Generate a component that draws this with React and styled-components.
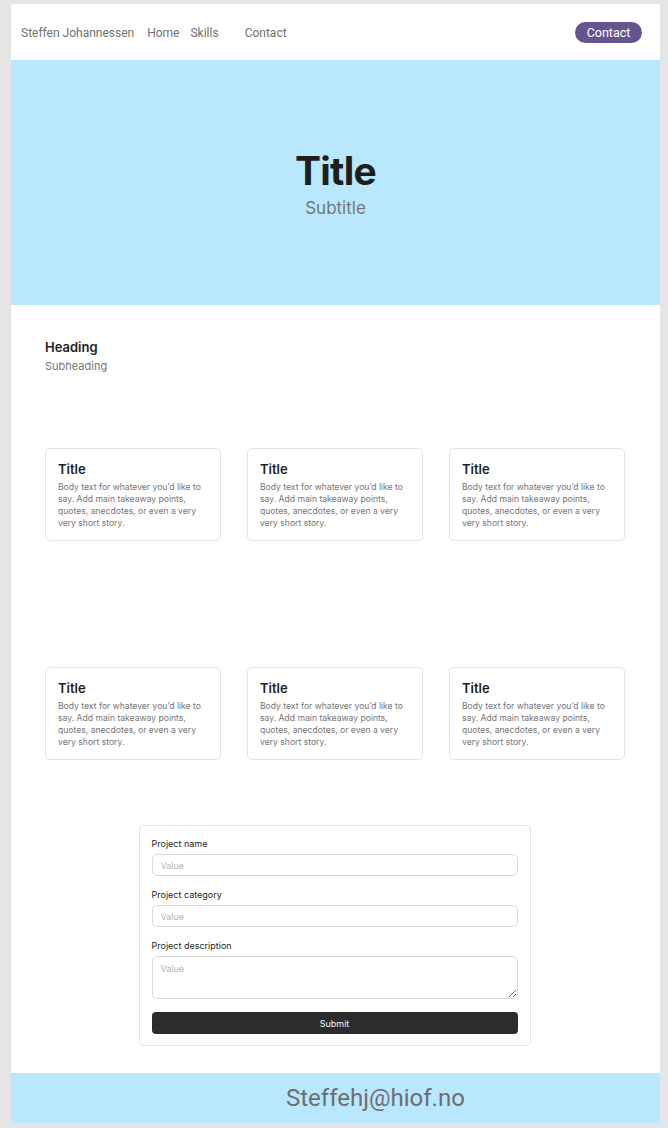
import React from 'react';
import styled, { createGlobalStyle } from 'styled-components';

const cards = [1, 2, 3];
const body =
  'Body text for whatever you’d like to say. Add main takeaway points, quotes, anecdotes, or even a very very short story.';

const App = () => {
  return (
    <>
      <GlobalStyle />
      <Page>
        <NavBar>
          <NavLinks>
            <NavLink $space={13}>Steffen Johannessen</NavLink>
            <NavLink $space={11}>Home</NavLink>
            <NavLink $space={26}>Skills</NavLink>
            <NavLink $space={0}>Contact</NavLink>
          </NavLinks>
          <ContactButton>Contact</ContactButton>
        </NavBar>

        <Hero>
          <HeroTitle>Title</HeroTitle>
          <HeroSubtitle>Subtitle</HeroSubtitle>
        </Hero>

        <Content>
          <Heading>Heading</Heading>
          <Subheading>Subheading</Subheading>

          <CardRow $top={75}>
            {cards.map((c) => (
              <Card key={c}>
                <CardTitle>Title</CardTitle>
                <CardBody>{body}</CardBody>
              </Card>
            ))}
          </CardRow>
          <CardRow $top={126}>
            {cards.map((c) => (
              <Card key={c}>
                <CardTitle>Title</CardTitle>
                <CardBody>{body}</CardBody>
              </Card>
            ))}
          </CardRow>

          <Form onSubmit={(e) => e.preventDefault()}>
            <Field>
              <Label>Project name</Label>
              <Input placeholder="Value" />
            </Field>
            <Field>
              <Label>Project category</Label>
              <Input placeholder="Value" />
            </Field>
            <Field>
              <Label>Project description</Label>
              <TextArea placeholder="Value" />
            </Field>
            <SubmitButton type="submit">Submit</SubmitButton>
          </Form>
        </Content>

        <Footer>Steffehj@hiof.no</Footer>
      </Page>
    </>
  );
};

export default App;

const GlobalStyle = createGlobalStyle`
  body {
    margin: 0;
    background: #e5e5e5;
    font-family: 'Inter', sans-serif;
  }
`;

const Page = styled.div`
  width: 649px;
  margin: 4px 0 5px 11px;
  background: #ffffff;
  display: flex;
  flex-direction: column;
`;

const NavBar = styled.nav`
  height: 56px;
  display: flex;
  align-items: center;
  justify-content: space-between;
  padding: 1px 18px 0 10px;
  box-sizing: border-box;
  font-family: 'Roboto', sans-serif;
`;

const NavLinks = styled.div`
  display: flex;
  align-items: center;
`;

const NavLink = styled.a`
  font-size: 12px;
  color: #707070;
  margin-right: ${(p) => p.$space}px;
  cursor: pointer;
`;

const ContactButton = styled.button`
  width: 67px;
  height: 21px;
  border: none;
  border-radius: 11px;
  background: #65558f;
  color: #ffffff;
  font-family: 'Roboto', sans-serif;
  font-size: 12.5px;
  padding: 0;
  cursor: pointer;
`;

const Hero = styled.section`
  height: 245px;
  background: #b9e8fe;
  display: flex;
  flex-direction: column;
  align-items: center;
  justify-content: center;
`;

const HeroTitle = styled.h1`
  margin: 0;
  font-size: 39px;
  line-height: 48px;
  font-weight: 700;
  color: #1e1e1e;
  letter-spacing: -0.8px;
`;

const HeroSubtitle = styled.p`
  margin: 2px 0 0;
  font-size: 17px;
  line-height: 22px;
  color: #757575;
`;

const Content = styled.main`
  display: flex;
  flex-direction: column;
  padding: 34px 35px 27px 34px;
`;

const Heading = styled.h2`
  margin: 0;
  font-size: 13px;
  line-height: 16px;
  font-weight: 600;
  color: #1e1e1e;
`;

const Subheading = styled.p`
  margin: 4px 0 0;
  font-size: 11px;
  line-height: 14px;
  color: #757575;
`;

const CardRow = styled.div`
  display: grid;
  grid-template-columns: repeat(3, 176px);
  gap: 26px;
  margin-top: ${(p) => p.$top}px;
`;

const Card = styled.div`
  height: 93px;
  box-sizing: border-box;
  border: 1px solid #e3e3e3;
  border-radius: 5px;
  padding: 12px 12px 0;
`;

const CardTitle = styled.h3`
  margin: 0;
  font-size: 13px;
  line-height: 16px;
  font-weight: 600;
  color: #1e1e1e;
`;

const CardBody = styled.p`
  margin: 4px 0 0;
  font-size: 8.6px;
  line-height: 12px;
  color: #757575;
`;

const Form = styled.form`
  align-self: center;
  width: 392px;
  margin: 65px 0 0 -1px;
  box-sizing: border-box;
  border: 1px solid #e3e3e3;
  border-radius: 5px;
  padding: 12px 12px 11px;
  display: flex;
  flex-direction: column;
  gap: 13px;
`;

const Field = styled.div`
  display: flex;
  flex-direction: column;
  gap: 4px;
`;

const Label = styled.label`
  font-size: 9px;
  line-height: 12px;
  color: #1e1e1e;
`;

const Input = styled.input`
  height: 22px;
  box-sizing: border-box;
  border: 1px solid #d9d9d9;
  border-radius: 5px;
  padding: 0 8px;
  font-family: 'Inter', sans-serif;
  font-size: 9px;
  color: #1e1e1e;
  outline: none;

  &::placeholder {
    color: #b3b3b3;
  }
`;

const TextArea = styled.textarea`
  height: 43px;
  box-sizing: border-box;
  border: 1px solid #d9d9d9;
  border-radius: 5px;
  padding: 6px 8px;
  font-family: 'Inter', sans-serif;
  font-size: 9px;
  color: #1e1e1e;
  resize: vertical;
  outline: none;

  &::placeholder {
    color: #b3b3b3;
  }
`;

const SubmitButton = styled.button`
  height: 22px;
  border: none;
  border-radius: 4px;
  background: #2c2c2c;
  color: #f5f5f5;
  font-family: 'Inter', sans-serif;
  font-size: 9px;
  cursor: pointer;
`;

const Footer = styled.footer`
  height: 50px;
  background: #b9e8fe;
  display: flex;
  align-items: center;
  padding-left: 275px;
  font-family: 'Roboto', sans-serif;
  font-size: 24px;
  color: #6e6e6e;
`;
